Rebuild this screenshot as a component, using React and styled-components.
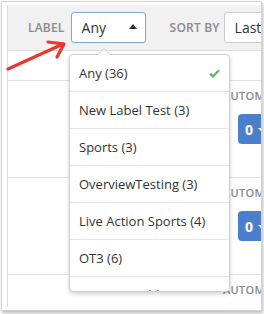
import { styled, createGlobalStyle } from 'styled-components';

const GlobalStyle = createGlobalStyle`
  body {
    margin: 0;
    background: #ffffff;
    font-family: "Open Sans", "Liberation Sans", sans-serif;
  }
`;

const Stage = styled.div`
  position: relative;
  width: 264px;
  height: 314px;
  overflow: hidden;
`;

const Frame = styled.div`
  margin: 1px 0 0 1px;
  width: 261px;
  height: 310px;
  box-sizing: border-box;
  border: 1px solid #d4d4d4;
  box-shadow: 1px 2px 3px rgba(0, 0, 0, 0.28);
  background: #fff;
  padding: 3px 0 3px 5px;
`;

const Panel = styled.div`
  position: relative;
  height: 100%;
  overflow: hidden;
  border-left: 1px solid #dcdcdc;
  background: #fff;
`;

const Header = styled.div`
  height: 45px;
  background: #f1f1f1;
  border-bottom: 1px solid #dedede;
  display: flex;
  align-items: center;
  padding-left: 20px;
  white-space: nowrap;
`;

const FieldLabel = styled.span`
  font-size: 12px;
  font-weight: 600;
  letter-spacing: 0.2px;
  color: #8a8a8a;
  margin-right: ${(p) => p.$gap}px;
`;

const Select = styled.div`
  flex: none;
  display: flex;
  align-items: center;
  justify-content: space-between;
  box-sizing: border-box;
  width: ${(p) => p.$width}px;
  height: 31px;
  padding: 0 8px 0 10px;
  border: 1px solid ${(p) => (p.$focused ? '#7ea6da' : '#cccccc')};
  border-radius: 3px;
  background: #fff;
  font-size: 14px;
  color: #333;
  margin-right: ${(p) => p.$gap || 0}px;
`;

const Caret = styled.span`
  width: 0;
  height: 0;
  border-left: 4.5px solid transparent;
  border-right: 4.5px solid transparent;
  border-bottom: 5px solid #333;
  margin-top: -2px;
`;

const Spacer = styled.div`
  height: 29px;
`;

const Row = styled.div`
  height: 96px;
  border-top: 1px solid #e2e2e2;
  display: flex;
  flex-direction: column;
  align-items: flex-start;
  padding-left: 215px;
`;

const RowLabel = styled.span`
  margin-top: 7px;
  font-size: 11px;
  line-height: 15px;
  font-weight: 600;
  color: #8a8a8a;
  letter-spacing: 0.3px;
  white-space: nowrap;
`;

const CountButton = styled.div`
  margin-top: 11px;
  margin-left: 15px;
  flex: none;
  width: 44px;
  height: 30px;
  border-radius: 4px;
  background: #4c7fc9;
  color: #fff;
  font-size: 14px;
  font-weight: 700;
  display: flex;
  align-items: center;
  padding-left: 7px;
  box-sizing: border-box;
  gap: 5px;
`;

const SmallCaret = styled.span`
  width: 0;
  height: 0;
  border-left: 3px solid transparent;
  border-right: 3px solid transparent;
  border-top: 3px solid #fff;
`;

const Menu = styled.div`
  position: absolute;
  left: 61px;
  top: 49px;
  width: 161px;
  height: 238px;
  box-sizing: border-box;
  background: #fff;
  border: 1px solid #cfcfcf;
  border-radius: 4px;
  box-shadow: 0 2px 4px rgba(0, 0, 0, 0.18);

  &::before,
  &::after {
    content: '';
    position: absolute;
    left: 27px;
    width: 0;
    height: 0;
    border-left: 7px solid transparent;
    border-right: 7px solid transparent;
  }
  &::before {
    top: -7px;
    border-bottom: 7px solid #cfcfcf;
  }
  &::after {
    top: -6px;
    border-bottom: 7px solid #fff;
  }
`;

const MenuList = styled.div`
  height: 100%;
  overflow: hidden;
  border-radius: 4px;
`;

const MenuItem = styled.div`
  height: 36px;
  border-bottom: 1px solid #e6e6e6;
  display: flex;
  align-items: center;
  justify-content: space-between;
  padding: 0 9px 0 9px;
  font-size: 13px;
  color: #333;
  white-space: nowrap;
`;

const Arrow = styled.svg`
  position: absolute;
  left: 0;
  top: 0;
  pointer-events: none;
`;

const labels = [
  'Any (36)',
  'New Label Test (3)',
  'Sports (3)',
  'OverviewTesting (3)',
  'Live Action Sports (4)',
  'OT3 (6)',
  'Disney World (2)',
];

function Check() {
  return (
    <svg width="11" height="9" viewBox="0 0 11 9">
      <path d="M1 4.6 L4 7.4 L10 1.2" fill="none" stroke="#5cb85c" strokeWidth="2.2" />
    </svg>
  );
}

export default function App() {
  return (
    <Stage>
      <GlobalStyle />
      <Frame>
        <Panel>
          <Header>
            <FieldLabel $gap={6}>LABEL</FieldLabel>
            <Select $focused $width={75} $gap={24}>
              Any
              <Caret />
            </Select>
            <FieldLabel $gap={4}>SORT BY</FieldLabel>
            <Select $width={90}>Last Updated</Select>
          </Header>
          <Spacer />
          {[0, 1, 2].map((i) => (
            <Row key={i}>
              <RowLabel>AUTOMATIC</RowLabel>
              <CountButton>
                0
                <SmallCaret />
              </CountButton>
            </Row>
          ))}
          <Menu>
            <MenuList>
              {labels.map((l, i) => (
                <MenuItem key={l}>
                  {l}
                  {i === 0 && <Check />}
                </MenuItem>
              ))}
            </MenuList>
          </Menu>
        </Panel>
      </Frame>
      <Arrow width="264" height="314" viewBox="0 0 264 314">
        <g fill="none" stroke="#e8382d" strokeWidth="3.2" strokeLinecap="round" strokeLinejoin="round">
          <path d="M8 69 L63 44" />
          <path d="M48 42 L64 44 L57 57" />
        </g>
      </Arrow>
    </Stage>
  );
}
